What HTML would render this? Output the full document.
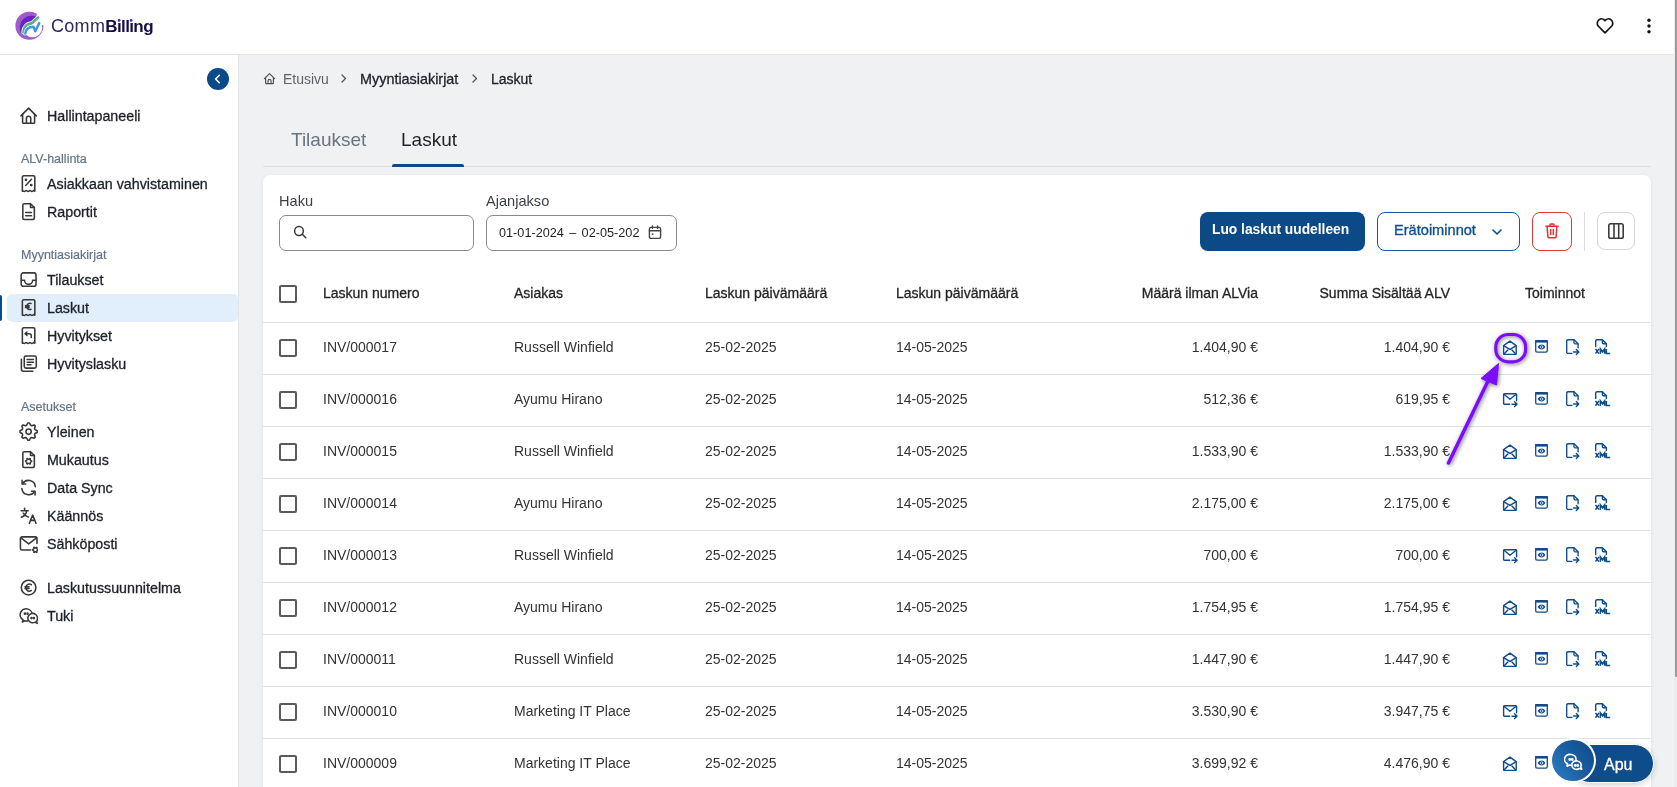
<!DOCTYPE html><html><head><meta charset="utf-8"><style>
*{box-sizing:border-box;margin:0;padding:0}
html,body{width:1677px;height:787px;overflow:hidden;background:#f0f1f3;font-family:"Liberation Sans",sans-serif;color:#1f2937}
.abs{position:absolute}
.t{position:absolute;white-space:nowrap;line-height:16px}
.nav{position:absolute;left:47px;font-size:14.25px;color:#1d2129;-webkit-text-stroke:0.3px #1d2129;white-space:nowrap;line-height:16px}
.sec{position:absolute;left:21px;font-size:12.5px;color:#667388;white-space:nowrap;line-height:14px;-webkit-text-stroke:0.2px #667388}
.cell{position:absolute;font-size:14px;line-height:16px;color:#333;white-space:nowrap}
.hd{position:absolute;font-size:14px;line-height:16px;color:#262626;white-space:nowrap;-webkit-text-stroke:0.3px #262626}
.r{text-align:right}
.cb{position:absolute;left:279px;width:18px;height:18px;border:2px solid #5a5a5a;border-radius:2px;background:#fff}
.ln{position:absolute;left:263px;width:1388px;height:1px;background:#e0e0e0}
</style></head><body><div id="root" style="position:absolute;left:0;top:0;width:1677px;height:787px;overflow:hidden;will-change:transform">
<div class="abs" style="left:0;top:0;width:1677px;height:55px;background:#fff;border-bottom:1px solid #e2e4e8"></div>
<svg class="abs" style="left:12px;top:8px" width="36" height="36" viewBox="12 8 36 36">
<defs><clipPath id="cpv"><path d="M8 40 L20 31 L27 22 L40 14 L48 4 L8 4 Z"/></clipPath></defs>
<circle cx="29.4" cy="25.75" r="14" fill="#a05bc8"/>
<circle cx="32.6" cy="27.7" r="9.6" fill="#fff"/>
<path d="M21.5 33.5 A11.6 11.6 0 0 1 38.4 18.2 L32.1 23.1 C26.5 23.6 23.8 27 23.4 32.5 Z" fill="#6723c5"/>
<path d="M32.6 27.7 L37.6 12 Q45 12 48 14 L48 26 L43.2 25 Z" fill="#fff"/>
<path d="M23.4 32.5 C23.8 27 26.5 23.6 32.1 23.1 L38.1 17.6" fill="none" stroke="#fff" stroke-width="4.2" stroke-linecap="round" stroke-linejoin="round"/>
<path d="M23.4 32.5 C23.8 27 26.5 23.6 32.1 23.1 L38.1 17.6" fill="none" stroke="#5fad8c" stroke-width="2.7" stroke-linecap="round" stroke-linejoin="round"/>
<path d="M25.3 33.6 C25.6 29.5 28 27 33.5 26.8 L35.3 31.3 L39.2 23.1" fill="none" stroke="#fff" stroke-width="3.6" stroke-linecap="round" stroke-linejoin="round"/>
<path d="M25.3 33.6 C25.6 29.5 28 27 33.5 26.8 L35.3 31.3 L39.2 23.1" fill="none" stroke="#3f9ae0" stroke-width="2.5" stroke-linecap="round" stroke-linejoin="round"/>
</svg>
<div class="t" style="left:51px;top:15px;font-size:18px;line-height:22px;color:#2e2862;letter-spacing:0.3px">Comm<b style="color:#160f44;font-size:17px;letter-spacing:-0.6px">Bıllıng</b></div>
<svg class="abs" style="left:110px;top:15px" width="30" height="10" viewBox="110 15 30 10"><circle cx="119.1" cy="20.4" r="1.4" fill="#5a16cf"/><circle cx="131.1" cy="20.4" r="1.4" fill="#5a16cf"/></svg>
<svg class="abs" style="left:1595px;top:17px" width="20" height="18" viewBox="0 0 20 18"><path d="M10 15.8 L3.2 9 A4.3 4.3 0 0 1 10 3.6 A4.3 4.3 0 0 1 16.8 9 Z" fill="none" stroke="#141414" stroke-width="1.7" stroke-linejoin="round"/></svg>
<svg class="abs" style="left:1644px;top:16px" width="10" height="20" viewBox="0 0 10 20"><circle cx="5" cy="4.3" r="1.7" fill="#141414"/><circle cx="5" cy="10" r="1.7" fill="#141414"/><circle cx="5" cy="15.8" r="1.7" fill="#141414"/></svg>
<div class="abs" style="left:0;top:55px;width:239px;height:732px;background:#fff;border-right:1px solid #e2e4e8"></div>
<div class="abs" style="left:207px;top:68px;width:22px;height:22px;border-radius:50%;background:#0c4a8a"></div>
<svg class="abs" style="left:207px;top:68px" width="22" height="22" viewBox="0 0 22 22" ><path d="M12.3 7.2 L8.6 11 L12.3 14.8" fill="none" stroke="#fff" stroke-width="1.5" stroke-linecap="round" stroke-linejoin="round"/></svg>
<div class="abs" style="left:7px;top:294px;width:231px;height:28px;border-radius:5px;background:#e1eefc"></div>
<div class="abs" style="left:0;top:295px;width:2px;height:26px;border-radius:0 2px 2px 0;background:#0c4a8a"></div>
<div class="nav" style="top:108px">Hallintapaneeli</div>
<svg class="abs" style="left:19.3px;top:106.4px" width="19.2" height="19.2" viewBox="0 0 16 16"><g fill="none" stroke="#383838" stroke-width="1.3" stroke-linecap="round" stroke-linejoin="round"><path d="M1.6 8.2 L8 1.8 L14.4 8.2"/><path d="M3 6.8 V13.6 A0.8 0.8 0 0 0 3.8 14.4 H12.2 A0.8 0.8 0 0 0 13 13.6 V6.8"/><path d="M6.2 14.4 V10.4 A1.8 1.8 0 0 1 9.8 10.4 V14.4"/></g></svg>
<div class="nav" style="top:176px">Asiakkaan vahvistaminen</div>
<svg class="abs" style="left:19.3px;top:174.4px" width="19.2" height="19.2" viewBox="0 0 16 16"><g fill="none" stroke="#383838" stroke-width="1.3" stroke-linecap="round" stroke-linejoin="round"><path d="M2.8 14.4 V2.6 A1.2 1.2 0 0 1 4 1.4 H12 A1.2 1.2 0 0 1 13.2 2.6 V14.4 Q12.4 13.4 11.6 14.2 Q10.8 15 10 14.2 Q9.2 13.4 8.4 14.2 Q7.6 15 6.8 14.2 Q6 13.4 5.2 14.2 Q4.4 15 3.6 14.2 Q3.2 13.8 2.8 14.4 Z"/><path d="M5.6 9.6 L10.4 4.4"/><circle cx="5.8" cy="4.8" r="0.5" fill="#383838"/><circle cx="10.2" cy="9.2" r="0.5" fill="#383838"/></g></svg>
<div class="nav" style="top:204px">Raportit</div>
<svg class="abs" style="left:19.3px;top:202.4px" width="19.2" height="19.2" viewBox="0 0 16 16"><g fill="none" stroke="#383838" stroke-width="1.3" stroke-linecap="round" stroke-linejoin="round"><path d="M9.6 1.4 H4.4 A1.2 1.2 0 0 0 3.2 2.6 V13.4 A1.2 1.2 0 0 0 4.4 14.6 H11.6 A1.2 1.2 0 0 0 12.8 13.4 V4.6 Z"/><path d="M9.6 1.4 V4.6 H12.8"/><path d="M5.6 8.8 H10.4 M5.6 11.4 H10.4"/></g></svg>
<div class="nav" style="top:272px">Tilaukset</div>
<svg class="abs" style="left:19.3px;top:270.4px" width="19.2" height="19.2" viewBox="0 0 16 16"><g fill="none" stroke="#383838" stroke-width="1.3" stroke-linecap="round" stroke-linejoin="round"><rect x="1.8" y="2.4" width="12.4" height="11.2" rx="1.8"/><path d="M1.8 8.6 H4.6 A3.4 3.4 0 0 0 11.4 8.6 H14.2"/></g></svg>
<div class="nav" style="top:300px">Laskut</div>
<svg class="abs" style="left:19.3px;top:298.4px" width="19.2" height="19.2" viewBox="0 0 16 16"><g fill="none" stroke="#383838" stroke-width="1.3" stroke-linecap="round" stroke-linejoin="round"><path d="M2.8 14.4 V2.6 A1.2 1.2 0 0 1 4 1.4 H12 A1.2 1.2 0 0 1 13.2 2.6 V14.4 Q12.4 13.4 11.6 14.2 Q10.8 15 10 14.2 Q9.2 13.4 8.4 14.2 Q7.6 15 6.8 14.2 Q6 13.4 5.2 14.2 Q4.4 15 3.6 14.2 Q3.2 13.8 2.8 14.4 Z"/><path d="M10 4.6 A2.6 2.6 0 1 0 10 9.4"/><path d="M5.4 6.4 H8.4 M5.4 7.8 H8.4"/></g></svg>
<div class="nav" style="top:328px">Hyvitykset</div>
<svg class="abs" style="left:19.3px;top:326.4px" width="19.2" height="19.2" viewBox="0 0 16 16"><g fill="none" stroke="#383838" stroke-width="1.3" stroke-linecap="round" stroke-linejoin="round"><path d="M2.8 14.4 V2.6 A1.2 1.2 0 0 1 4 1.4 H12 A1.2 1.2 0 0 1 13.2 2.6 V14.4 Q12.4 13.4 11.6 14.2 Q10.8 15 10 14.2 Q9.2 13.4 8.4 14.2 Q7.6 15 6.8 14.2 Q6 13.4 5.2 14.2 Q4.4 15 3.6 14.2 Q3.2 13.8 2.8 14.4 Z"/><path d="M6.6 5 L5.2 6.4 L6.6 7.8"/><path d="M5.2 6.4 H8.6 A1.6 1.6 0 0 1 10.2 8 V9.6"/></g></svg>
<div class="nav" style="top:356px">Hyvityslasku</div>
<svg class="abs" style="left:19.3px;top:354.4px" width="19.2" height="19.2" viewBox="0 0 16 16"><g fill="none" stroke="#383838" stroke-width="1.3" stroke-linecap="round" stroke-linejoin="round"><rect x="4.4" y="1.6" width="10" height="10.2" rx="1.4"/><path d="M2 4.4 V12.6 A1.8 1.8 0 0 0 3.8 14.4 H11.6"/><path d="M6.8 4.6 H12 M6.8 6.8 H12 M6.8 9 H10"/></g></svg>
<div class="nav" style="top:424px">Yleinen</div>
<svg class="abs" style="left:19.3px;top:422.4px" width="19.2" height="19.2" viewBox="0 0 16 16"><g fill="none" stroke="#383838" stroke-width="1.3" stroke-linecap="round" stroke-linejoin="round"><path d="M15.17 7.29 L15.17 8.71 L13.36 9.63 L12.94 10.64 L13.57 12.57 L12.57 13.57 L10.64 12.94 L9.63 13.36 L8.71 15.17 L7.29 15.17 L6.37 13.36 L5.36 12.94 L3.43 13.57 L2.43 12.57 L3.06 10.64 L2.64 9.63 L0.83 8.71 L0.83 7.29 L2.64 6.37 L3.06 5.36 L2.43 3.43 L3.43 2.43 L5.36 3.06 L6.37 2.64 L7.29 0.83 L8.71 0.83 L9.63 2.64 L10.64 3.06 L12.57 2.43 L13.57 3.43 L12.94 5.36 L13.36 6.37Z"/><circle cx="8" cy="8" r="2.2"/></g></svg>
<div class="nav" style="top:452px">Mukautus</div>
<svg class="abs" style="left:19.3px;top:450.4px" width="19.2" height="19.2" viewBox="0 0 16 16"><g fill="none" stroke="#383838" stroke-width="1.3" stroke-linecap="round" stroke-linejoin="round"><path d="M9.6 1.4 H4.4 A1.2 1.2 0 0 0 3.2 2.6 V13.4 A1.2 1.2 0 0 0 4.4 14.6 H11.6 A1.2 1.2 0 0 0 12.8 13.4 V4.6 Z"/><path d="M9.6 1.4 V4.6 H12.8"/><path d="M10.58 9.06 L10.58 9.74 L9.57 10.05 L9.35 10.43 L9.58 11.46 L8.99 11.80 L8.22 11.09 L7.78 11.09 L7.01 11.80 L6.42 11.46 L6.65 10.43 L6.43 10.05 L5.42 9.74 L5.42 9.06 L6.43 8.75 L6.65 8.37 L6.42 7.34 L7.01 7.00 L7.78 7.71 L8.22 7.71 L8.99 7.00 L9.58 7.34 L9.35 8.37 L9.57 8.75Z" stroke-width="1.1"/></g></svg>
<div class="nav" style="top:480px">Data Sync</div>
<svg class="abs" style="left:19.3px;top:478.4px" width="19.2" height="19.2" viewBox="0 0 16 16"><g fill="none" stroke="#383838" stroke-width="1.3" stroke-linecap="round" stroke-linejoin="round"><path d="M13.6 7.2 A5.8 5.8 0 0 0 3 4.6"/><path d="M2.4 8.8 A5.8 5.8 0 0 0 13 11.4"/><path d="M2.6 1.8 V5 H5.6"/><path d="M13.4 14.2 V11 H10.4"/></g></svg>
<div class="nav" style="top:508px">Käännös</div>
<svg class="abs" style="left:19.3px;top:506.4px" width="19.2" height="19.2" viewBox="0 0 16 16"><g fill="none" stroke="#383838" stroke-width="1.3" stroke-linecap="round" stroke-linejoin="round"><path d="M1.8 4 H7.6 M4.7 1.8 V4 M6.4 4 C6 7 4 8.6 2 9.4 M3.6 6 C4.4 7.6 6 8.8 7.8 9.2"/><path d="M8.6 14.4 L11.4 7.6 L14.2 14.4 M9.6 12 H13.2"/></g></svg>
<div class="nav" style="top:536px">Sähköposti</div>
<svg class="abs" style="left:19.3px;top:534.4px" width="19.2" height="19.2" viewBox="0 0 16 16"><g fill="none" stroke="#383838" stroke-width="1.3" stroke-linecap="round" stroke-linejoin="round"><path d="M15 8 V3.8 A1.4 1.4 0 0 0 13.6 2.4 H2.6 A1.4 1.4 0 0 0 1.2 3.8 V12 A1.4 1.4 0 0 0 2.6 13.4 H9.6"/><path d="M1.6 3.2 L8.1 8.2 L14.6 3.2"/><path d="M15.98 12.89 L15.98 13.51 L14.99 13.77 L14.79 14.11 L15.06 15.10 L14.52 15.42 L13.80 14.69 L13.40 14.69 L12.68 15.42 L12.14 15.10 L12.41 14.11 L12.21 13.77 L11.22 13.51 L11.22 12.89 L12.21 12.63 L12.41 12.29 L12.14 11.30 L12.68 10.98 L13.40 11.71 L13.80 11.71 L14.52 10.98 L15.06 11.30 L14.79 12.29 L14.99 12.63Z" stroke-width="1.1"/></g></svg>
<div class="nav" style="top:580px">Laskutussuunnitelma</div>
<svg class="abs" style="left:19.3px;top:578.4px" width="19.2" height="19.2" viewBox="0 0 16 16"><g fill="none" stroke="#383838" stroke-width="1.3" stroke-linecap="round" stroke-linejoin="round"><circle cx="8" cy="8" r="6.1"/><path d="M10.3 5.6 A2.9 2.9 0 1 0 10.3 10.4"/><path d="M5 7.3 H8.4 M5 8.7 H8.4"/></g></svg>
<div class="nav" style="top:608px">Tuki</div>
<svg class="abs" style="left:19.3px;top:606.4px" width="19.2" height="19.2" viewBox="0 0 16 16"><g fill="none" stroke="#383838" stroke-width="1.3" stroke-linecap="round" stroke-linejoin="round"><path d="M10.8 8.6 A5 5 0 1 0 3.4 11.6 L2.8 13.3 L4.9 12.3 A5 5 0 0 0 7.2 12.4"/><path d="M15.4 10.1 A4 3.9 0 1 0 13.5 13.4 L15.2 14.5 L14.7 12.6 A4 3.9 0 0 0 15.4 10.1 Z" fill="#fff"/><circle cx="4.9" cy="6.4" r="0.45" fill="#383838"/><circle cx="7.1" cy="6.4" r="0.45" fill="#383838"/><circle cx="10.4" cy="10.1" r="0.45" fill="#383838"/><circle cx="12.4" cy="10.1" r="0.45" fill="#383838"/></g></svg>
<div class="sec" style="top:152px">ALV-hallinta</div>
<div class="sec" style="top:248px">Myyntiasiakirjat</div>
<div class="sec" style="top:400px">Asetukset</div>
<svg class="abs" style="left:263px;top:72px" width="13" height="13" viewBox="0 0 13 13"><g fill="none" stroke="#555" stroke-width="1.2" stroke-linecap="round" stroke-linejoin="round"><path d="M1.4 6.6 L6.5 1.6 L11.6 6.6"/><path d="M2.6 5.4 V11 A0.6 0.6 0 0 0 3.2 11.6 H9.8 A0.6 0.6 0 0 0 10.4 11 V5.4"/><path d="M5 11.6 V8.8 A1.5 1.5 0 0 1 8 8.8 V11.6"/></g></svg>
<div class="t" style="left:283px;top:71px;font-size:14px;color:#5f6368">Etusivu</div>
<svg class="abs" style="left:339px;top:73px" width="10" height="11" viewBox="0 0 10 11"><g fill="none" stroke="#555" stroke-width="1.3" stroke-linecap="round" stroke-linejoin="round"><path d="M3 2 L6.5 5.5 L3 9"/></g></svg>
<div class="t" style="left:360px;top:71px;font-size:14.4px;color:#1d2129;-webkit-text-stroke:0.3px #1d2129">Myyntiasiakirjat</div>
<svg class="abs" style="left:470px;top:73px" width="10" height="11" viewBox="0 0 10 11"><g fill="none" stroke="#555" stroke-width="1.3" stroke-linecap="round" stroke-linejoin="round"><path d="M3 2 L6.5 5.5 L3 9"/></g></svg>
<div class="t" style="left:491px;top:71px;font-size:14px;color:#1d2129;-webkit-text-stroke:0.3px #1d2129">Laskut</div>
<div class="t" style="left:291px;top:129px;font-size:19px;line-height:22px;color:#6b7280">Tilaukset</div>
<div class="t" style="left:401px;top:129px;font-size:19px;line-height:22px;color:#1f2229">Laskut</div>
<div class="abs" style="left:263px;top:166px;width:1388px;height:1px;background:#dcdfe4"></div>
<div class="abs" style="left:392px;top:164px;width:72px;height:3px;border-radius:2px 2px 0 0;background:#0c4a8a"></div>
<div class="abs" style="left:263px;top:175px;width:1388px;height:640px;border-radius:8px;background:#fff;box-shadow:0 1px 4px rgba(0,0,0,0.07)"></div>
<div class="t" style="left:279px;top:193px;font-size:14.6px;color:#3a3f47">Haku</div>
<div class="abs" style="left:279px;top:215px;width:195px;height:36px;border:1px solid #8a8a8a;border-radius:7px"></div>
<svg class="abs" style="left:293px;top:225px" width="15" height="15" viewBox="0 0 15 15"><g fill="none" stroke="#3a3a3a" stroke-width="1.5" stroke-linecap="round" stroke-linejoin="round"><circle cx="6" cy="6" r="4.4"/><path d="M9.3 9.3 L12.8 12.8"/></g></svg>
<div class="t" style="left:486px;top:193px;font-size:14.6px;color:#3a3f47">Ajanjakso</div>
<div class="abs" style="left:486px;top:215px;width:191px;height:36px;border:1px solid #8a8a8a;border-radius:7px"></div>
<div class="t" style="left:499px;top:225px;font-size:12.7px;color:#1f1f1f;word-spacing:1.8px">01-01-2024 – 02-05-202</div>
<svg class="abs" style="left:648px;top:225px" width="14" height="15" viewBox="0 0 14 15"><g fill="none" stroke="#444" stroke-width="1.4" stroke-linecap="round" stroke-linejoin="round"><rect x="1.4" y="2.4" width="11.2" height="11" rx="1.6"/><path d="M1.4 5.8 H12.6 M4.4 1 V3.4 M9.6 1 V3.4"/><rect x="3.8" y="8.4" width="1.6" height="1.6" fill="#444" stroke="none"/></g></svg>
<div class="abs" style="left:1200px;top:212px;width:165px;height:39px;border-radius:8px;background:#0b4a87"></div>
<div class="t" style="left:1212px;top:222px;font-size:13.8px;color:#fff;font-weight:bold">Luo laskut uudelleen</div>
<div class="abs" style="left:1377px;top:212px;width:143px;height:39px;border-radius:8px;border:1.5px solid #1a5597;background:#fff"></div>
<div class="t" style="left:1394px;top:222px;font-size:14.6px;color:#12508f;-webkit-text-stroke:0.35px #12508f">Erätoiminnot</div>
<svg class="abs" style="left:1490px;top:225px" width="14" height="14" viewBox="0 0 14 14"><g fill="none" stroke="#12508f" stroke-width="1.7" stroke-linecap="round" stroke-linejoin="round"><path d="M3 5 L7 9 L11 5"/></g></svg>
<div class="abs" style="left:1532px;top:212px;width:40px;height:39px;border-radius:8px;border:1.5px solid #df3b3b;background:#fff"></div>
<svg class="abs" style="left:1543px;top:222px" width="18" height="18" viewBox="0 0 18 18"><g fill="none" stroke="#dd3535" stroke-width="1.5" stroke-linecap="round" stroke-linejoin="round"><path d="M2.9 4.2 H15.1"/><path d="M7 4 V2.9 A0.9 0.9 0 0 1 7.9 2 H10.1 A0.9 0.9 0 0 1 11 2.9 V4"/><path d="M4.1 4.4 L4.9 14.9 A1 1 0 0 0 5.9 15.8 H12.1 A1 1 0 0 0 13.1 14.9 L13.9 4.4"/><path d="M7.7 7.6 V12.4 M10.3 7.6 V12.4"/></g></svg>
<div class="abs" style="left:1584px;top:212px;width:1px;height:39px;background:#dcdcdc"></div>
<div class="abs" style="left:1597px;top:212px;width:38px;height:38px;border-radius:8px;border:1px solid #d6d6d6;background:#fff"></div>
<svg class="abs" style="left:1607px;top:222px" width="18" height="18" viewBox="0 0 18 18"><g fill="none" stroke="#3c3c3c" stroke-width="1.6" stroke-linecap="round" stroke-linejoin="round"><rect x="1.8" y="1.8" width="14.4" height="14.4" rx="1.8"/><path d="M7 1.8 V16.2 M11.7 1.8 V16.2"/></g></svg>
<div class="cb" style="top:285px"></div>
<div class="hd" style="left:323px;top:285px">Laskun numero</div>
<div class="hd" style="left:514px;top:285px">Asiakas</div>
<div class="hd" style="left:705px;top:285px">Laskun päivämäärä</div>
<div class="hd" style="left:896px;top:285px">Laskun päivämäärä</div>
<div class="hd r" style="left:1058px;width:200px;top:285px">Määrä ilman ALVia</div>
<div class="hd r" style="left:1250px;width:200px;top:285px">Summa Sisältää ALV</div>
<div class="hd" style="left:1455px;width:200px;top:285px;text-align:center">Toiminnot</div>
<div class="ln" style="top:322px"></div>
<div class="cb" style="top:339px"></div>
<div class="cell" style="left:323px;top:339px">INV/000017</div>
<div class="cell" style="left:514px;top:339px">Russell Winfield</div>
<div class="cell" style="left:705px;top:339px">25-02-2025</div>
<div class="cell" style="left:896px;top:339px">14-05-2025</div>
<div class="cell r" style="left:1058px;width:200px;top:339px">1.404,90 €</div>
<div class="cell r" style="left:1250px;width:200px;top:339px">1.404,90 €</div>
<svg class="abs" style="left:1502px;top:340px" width="16" height="16" viewBox="0 0 16 16"><g fill="none" stroke="#0f4c8c" stroke-width="1.4" stroke-linecap="round" stroke-linejoin="round"><path d="M1.6 5.6 L7.9 1.1 L14.2 5.6 V13.6 A0.8 0.8 0 0 1 13.4 14.4 H2.4 A0.8 0.8 0 0 1 1.6 13.6 Z"/><path d="M1.9 5.9 L7.9 9.4 L13.9 5.9"/><path d="M2 14 L5.9 9.9 M13.8 14 L9.9 9.9"/></g></svg>
<svg class="abs" style="left:1534px;top:339px" width="16" height="16" viewBox="0 0 16 16"><g fill="none" stroke="#0f4c8c" stroke-width="1.3" stroke-linecap="round" stroke-linejoin="round"><rect x="1.7" y="1.7" width="11.6" height="11.5" rx="1.4"/><path d="M1.2 2.3 H13.8" stroke-width="2.6" stroke-linecap="butt"/><path d="M3.6 8 C5.4 4.7 9.6 4.7 11.4 8 C9.6 11.3 5.4 11.3 3.6 8 Z" fill="#0f4c8c" stroke="none"/><circle cx="7.5" cy="8" r="1.25" fill="none" stroke="#fff" stroke-width="0.65"/></g></svg>
<svg class="abs" style="left:1565px;top:338px" width="16" height="18" viewBox="0 0 16 18"><g fill="none" stroke="#0f4c8c" stroke-width="1.35" stroke-linecap="round" stroke-linejoin="round"><path d="M6.8 15.4 H3 A1.3 1.3 0 0 1 1.7 14.1 V3 A1.3 1.3 0 0 1 3 1.7 H9 L13.1 5.8 V9.7"/><path d="M9 2 V4.6 A1.2 1.2 0 0 0 10.2 5.8 H12.8"/><path d="M8.4 14 H13.6 M11.3 11.5 L13.8 14 L11.3 16.5"/></g></svg>
<svg class="abs" style="left:1594px;top:338px" width="17" height="18" viewBox="0 0 17 18"><g fill="none" stroke="#0f4c8c" stroke-width="1.4" stroke-linecap="round" stroke-linejoin="round"><path d="M1.7 8.6 V3 A1.3 1.3 0 0 1 3 1.7 H8.4 L12.4 5.7 V8.6"/><path d="M8.4 2 V4.5 A1.2 1.2 0 0 0 9.6 5.7 H12.1"/><path d="M1.5 10.9 L4.9 15.6 M4.9 10.9 L1.5 15.6 M6.4 15.8 V10.9 L8.5 13.8 L10.6 10.9 V15.8 M12.3 10.9 V15.5 H16.2" stroke-width="1.6" stroke-linecap="butt" stroke-linejoin="miter"/></g></svg>
<div class="ln" style="top:374px"></div>
<div class="cb" style="top:391px"></div>
<div class="cell" style="left:323px;top:391px">INV/000016</div>
<div class="cell" style="left:514px;top:391px">Ayumu Hirano</div>
<div class="cell" style="left:705px;top:391px">25-02-2025</div>
<div class="cell" style="left:896px;top:391px">14-05-2025</div>
<div class="cell r" style="left:1058px;width:200px;top:391px">512,36 €</div>
<div class="cell r" style="left:1250px;width:200px;top:391px">619,95 €</div>
<svg class="abs" style="left:1502px;top:392px" width="17" height="17" viewBox="0 0 17 17"><g fill="none" stroke="#0f4c8c" stroke-width="1.4" stroke-linecap="round" stroke-linejoin="round"><path d="M14.6 8.8 V2.8 A1 1 0 0 0 13.6 1.8 H2.6 A1 1 0 0 0 1.6 2.8 V11.2 A1 1 0 0 0 2.6 12.2 H7.7"/><path d="M2 2.3 L7.9 7.2 L14.2 2.3"/><path d="M10 12.2 H15 M12.6 9.8 L15.1 12.2 L12.6 14.6"/></g></svg>
<svg class="abs" style="left:1534px;top:391px" width="16" height="16" viewBox="0 0 16 16"><g fill="none" stroke="#0f4c8c" stroke-width="1.3" stroke-linecap="round" stroke-linejoin="round"><rect x="1.7" y="1.7" width="11.6" height="11.5" rx="1.4"/><path d="M1.2 2.3 H13.8" stroke-width="2.6" stroke-linecap="butt"/><path d="M3.6 8 C5.4 4.7 9.6 4.7 11.4 8 C9.6 11.3 5.4 11.3 3.6 8 Z" fill="#0f4c8c" stroke="none"/><circle cx="7.5" cy="8" r="1.25" fill="none" stroke="#fff" stroke-width="0.65"/></g></svg>
<svg class="abs" style="left:1565px;top:390px" width="16" height="18" viewBox="0 0 16 18"><g fill="none" stroke="#0f4c8c" stroke-width="1.35" stroke-linecap="round" stroke-linejoin="round"><path d="M6.8 15.4 H3 A1.3 1.3 0 0 1 1.7 14.1 V3 A1.3 1.3 0 0 1 3 1.7 H9 L13.1 5.8 V9.7"/><path d="M9 2 V4.6 A1.2 1.2 0 0 0 10.2 5.8 H12.8"/><path d="M8.4 14 H13.6 M11.3 11.5 L13.8 14 L11.3 16.5"/></g></svg>
<svg class="abs" style="left:1594px;top:390px" width="17" height="18" viewBox="0 0 17 18"><g fill="none" stroke="#0f4c8c" stroke-width="1.4" stroke-linecap="round" stroke-linejoin="round"><path d="M1.7 8.6 V3 A1.3 1.3 0 0 1 3 1.7 H8.4 L12.4 5.7 V8.6"/><path d="M8.4 2 V4.5 A1.2 1.2 0 0 0 9.6 5.7 H12.1"/><path d="M1.5 10.9 L4.9 15.6 M4.9 10.9 L1.5 15.6 M6.4 15.8 V10.9 L8.5 13.8 L10.6 10.9 V15.8 M12.3 10.9 V15.5 H16.2" stroke-width="1.6" stroke-linecap="butt" stroke-linejoin="miter"/></g></svg>
<div class="ln" style="top:426px"></div>
<div class="cb" style="top:443px"></div>
<div class="cell" style="left:323px;top:443px">INV/000015</div>
<div class="cell" style="left:514px;top:443px">Russell Winfield</div>
<div class="cell" style="left:705px;top:443px">25-02-2025</div>
<div class="cell" style="left:896px;top:443px">14-05-2025</div>
<div class="cell r" style="left:1058px;width:200px;top:443px">1.533,90 €</div>
<div class="cell r" style="left:1250px;width:200px;top:443px">1.533,90 €</div>
<svg class="abs" style="left:1502px;top:444px" width="16" height="16" viewBox="0 0 16 16"><g fill="none" stroke="#0f4c8c" stroke-width="1.4" stroke-linecap="round" stroke-linejoin="round"><path d="M1.6 5.6 L7.9 1.1 L14.2 5.6 V13.6 A0.8 0.8 0 0 1 13.4 14.4 H2.4 A0.8 0.8 0 0 1 1.6 13.6 Z"/><path d="M1.9 5.9 L7.9 9.4 L13.9 5.9"/><path d="M2 14 L5.9 9.9 M13.8 14 L9.9 9.9"/></g></svg>
<svg class="abs" style="left:1534px;top:443px" width="16" height="16" viewBox="0 0 16 16"><g fill="none" stroke="#0f4c8c" stroke-width="1.3" stroke-linecap="round" stroke-linejoin="round"><rect x="1.7" y="1.7" width="11.6" height="11.5" rx="1.4"/><path d="M1.2 2.3 H13.8" stroke-width="2.6" stroke-linecap="butt"/><path d="M3.6 8 C5.4 4.7 9.6 4.7 11.4 8 C9.6 11.3 5.4 11.3 3.6 8 Z" fill="#0f4c8c" stroke="none"/><circle cx="7.5" cy="8" r="1.25" fill="none" stroke="#fff" stroke-width="0.65"/></g></svg>
<svg class="abs" style="left:1565px;top:442px" width="16" height="18" viewBox="0 0 16 18"><g fill="none" stroke="#0f4c8c" stroke-width="1.35" stroke-linecap="round" stroke-linejoin="round"><path d="M6.8 15.4 H3 A1.3 1.3 0 0 1 1.7 14.1 V3 A1.3 1.3 0 0 1 3 1.7 H9 L13.1 5.8 V9.7"/><path d="M9 2 V4.6 A1.2 1.2 0 0 0 10.2 5.8 H12.8"/><path d="M8.4 14 H13.6 M11.3 11.5 L13.8 14 L11.3 16.5"/></g></svg>
<svg class="abs" style="left:1594px;top:442px" width="17" height="18" viewBox="0 0 17 18"><g fill="none" stroke="#0f4c8c" stroke-width="1.4" stroke-linecap="round" stroke-linejoin="round"><path d="M1.7 8.6 V3 A1.3 1.3 0 0 1 3 1.7 H8.4 L12.4 5.7 V8.6"/><path d="M8.4 2 V4.5 A1.2 1.2 0 0 0 9.6 5.7 H12.1"/><path d="M1.5 10.9 L4.9 15.6 M4.9 10.9 L1.5 15.6 M6.4 15.8 V10.9 L8.5 13.8 L10.6 10.9 V15.8 M12.3 10.9 V15.5 H16.2" stroke-width="1.6" stroke-linecap="butt" stroke-linejoin="miter"/></g></svg>
<div class="ln" style="top:478px"></div>
<div class="cb" style="top:495px"></div>
<div class="cell" style="left:323px;top:495px">INV/000014</div>
<div class="cell" style="left:514px;top:495px">Ayumu Hirano</div>
<div class="cell" style="left:705px;top:495px">25-02-2025</div>
<div class="cell" style="left:896px;top:495px">14-05-2025</div>
<div class="cell r" style="left:1058px;width:200px;top:495px">2.175,00 €</div>
<div class="cell r" style="left:1250px;width:200px;top:495px">2.175,00 €</div>
<svg class="abs" style="left:1502px;top:496px" width="16" height="16" viewBox="0 0 16 16"><g fill="none" stroke="#0f4c8c" stroke-width="1.4" stroke-linecap="round" stroke-linejoin="round"><path d="M1.6 5.6 L7.9 1.1 L14.2 5.6 V13.6 A0.8 0.8 0 0 1 13.4 14.4 H2.4 A0.8 0.8 0 0 1 1.6 13.6 Z"/><path d="M1.9 5.9 L7.9 9.4 L13.9 5.9"/><path d="M2 14 L5.9 9.9 M13.8 14 L9.9 9.9"/></g></svg>
<svg class="abs" style="left:1534px;top:495px" width="16" height="16" viewBox="0 0 16 16"><g fill="none" stroke="#0f4c8c" stroke-width="1.3" stroke-linecap="round" stroke-linejoin="round"><rect x="1.7" y="1.7" width="11.6" height="11.5" rx="1.4"/><path d="M1.2 2.3 H13.8" stroke-width="2.6" stroke-linecap="butt"/><path d="M3.6 8 C5.4 4.7 9.6 4.7 11.4 8 C9.6 11.3 5.4 11.3 3.6 8 Z" fill="#0f4c8c" stroke="none"/><circle cx="7.5" cy="8" r="1.25" fill="none" stroke="#fff" stroke-width="0.65"/></g></svg>
<svg class="abs" style="left:1565px;top:494px" width="16" height="18" viewBox="0 0 16 18"><g fill="none" stroke="#0f4c8c" stroke-width="1.35" stroke-linecap="round" stroke-linejoin="round"><path d="M6.8 15.4 H3 A1.3 1.3 0 0 1 1.7 14.1 V3 A1.3 1.3 0 0 1 3 1.7 H9 L13.1 5.8 V9.7"/><path d="M9 2 V4.6 A1.2 1.2 0 0 0 10.2 5.8 H12.8"/><path d="M8.4 14 H13.6 M11.3 11.5 L13.8 14 L11.3 16.5"/></g></svg>
<svg class="abs" style="left:1594px;top:494px" width="17" height="18" viewBox="0 0 17 18"><g fill="none" stroke="#0f4c8c" stroke-width="1.4" stroke-linecap="round" stroke-linejoin="round"><path d="M1.7 8.6 V3 A1.3 1.3 0 0 1 3 1.7 H8.4 L12.4 5.7 V8.6"/><path d="M8.4 2 V4.5 A1.2 1.2 0 0 0 9.6 5.7 H12.1"/><path d="M1.5 10.9 L4.9 15.6 M4.9 10.9 L1.5 15.6 M6.4 15.8 V10.9 L8.5 13.8 L10.6 10.9 V15.8 M12.3 10.9 V15.5 H16.2" stroke-width="1.6" stroke-linecap="butt" stroke-linejoin="miter"/></g></svg>
<div class="ln" style="top:530px"></div>
<div class="cb" style="top:547px"></div>
<div class="cell" style="left:323px;top:547px">INV/000013</div>
<div class="cell" style="left:514px;top:547px">Russell Winfield</div>
<div class="cell" style="left:705px;top:547px">25-02-2025</div>
<div class="cell" style="left:896px;top:547px">14-05-2025</div>
<div class="cell r" style="left:1058px;width:200px;top:547px">700,00 €</div>
<div class="cell r" style="left:1250px;width:200px;top:547px">700,00 €</div>
<svg class="abs" style="left:1502px;top:548px" width="17" height="17" viewBox="0 0 17 17"><g fill="none" stroke="#0f4c8c" stroke-width="1.4" stroke-linecap="round" stroke-linejoin="round"><path d="M14.6 8.8 V2.8 A1 1 0 0 0 13.6 1.8 H2.6 A1 1 0 0 0 1.6 2.8 V11.2 A1 1 0 0 0 2.6 12.2 H7.7"/><path d="M2 2.3 L7.9 7.2 L14.2 2.3"/><path d="M10 12.2 H15 M12.6 9.8 L15.1 12.2 L12.6 14.6"/></g></svg>
<svg class="abs" style="left:1534px;top:547px" width="16" height="16" viewBox="0 0 16 16"><g fill="none" stroke="#0f4c8c" stroke-width="1.3" stroke-linecap="round" stroke-linejoin="round"><rect x="1.7" y="1.7" width="11.6" height="11.5" rx="1.4"/><path d="M1.2 2.3 H13.8" stroke-width="2.6" stroke-linecap="butt"/><path d="M3.6 8 C5.4 4.7 9.6 4.7 11.4 8 C9.6 11.3 5.4 11.3 3.6 8 Z" fill="#0f4c8c" stroke="none"/><circle cx="7.5" cy="8" r="1.25" fill="none" stroke="#fff" stroke-width="0.65"/></g></svg>
<svg class="abs" style="left:1565px;top:546px" width="16" height="18" viewBox="0 0 16 18"><g fill="none" stroke="#0f4c8c" stroke-width="1.35" stroke-linecap="round" stroke-linejoin="round"><path d="M6.8 15.4 H3 A1.3 1.3 0 0 1 1.7 14.1 V3 A1.3 1.3 0 0 1 3 1.7 H9 L13.1 5.8 V9.7"/><path d="M9 2 V4.6 A1.2 1.2 0 0 0 10.2 5.8 H12.8"/><path d="M8.4 14 H13.6 M11.3 11.5 L13.8 14 L11.3 16.5"/></g></svg>
<svg class="abs" style="left:1594px;top:546px" width="17" height="18" viewBox="0 0 17 18"><g fill="none" stroke="#0f4c8c" stroke-width="1.4" stroke-linecap="round" stroke-linejoin="round"><path d="M1.7 8.6 V3 A1.3 1.3 0 0 1 3 1.7 H8.4 L12.4 5.7 V8.6"/><path d="M8.4 2 V4.5 A1.2 1.2 0 0 0 9.6 5.7 H12.1"/><path d="M1.5 10.9 L4.9 15.6 M4.9 10.9 L1.5 15.6 M6.4 15.8 V10.9 L8.5 13.8 L10.6 10.9 V15.8 M12.3 10.9 V15.5 H16.2" stroke-width="1.6" stroke-linecap="butt" stroke-linejoin="miter"/></g></svg>
<div class="ln" style="top:582px"></div>
<div class="cb" style="top:599px"></div>
<div class="cell" style="left:323px;top:599px">INV/000012</div>
<div class="cell" style="left:514px;top:599px">Ayumu Hirano</div>
<div class="cell" style="left:705px;top:599px">25-02-2025</div>
<div class="cell" style="left:896px;top:599px">14-05-2025</div>
<div class="cell r" style="left:1058px;width:200px;top:599px">1.754,95 €</div>
<div class="cell r" style="left:1250px;width:200px;top:599px">1.754,95 €</div>
<svg class="abs" style="left:1502px;top:600px" width="16" height="16" viewBox="0 0 16 16"><g fill="none" stroke="#0f4c8c" stroke-width="1.4" stroke-linecap="round" stroke-linejoin="round"><path d="M1.6 5.6 L7.9 1.1 L14.2 5.6 V13.6 A0.8 0.8 0 0 1 13.4 14.4 H2.4 A0.8 0.8 0 0 1 1.6 13.6 Z"/><path d="M1.9 5.9 L7.9 9.4 L13.9 5.9"/><path d="M2 14 L5.9 9.9 M13.8 14 L9.9 9.9"/></g></svg>
<svg class="abs" style="left:1534px;top:599px" width="16" height="16" viewBox="0 0 16 16"><g fill="none" stroke="#0f4c8c" stroke-width="1.3" stroke-linecap="round" stroke-linejoin="round"><rect x="1.7" y="1.7" width="11.6" height="11.5" rx="1.4"/><path d="M1.2 2.3 H13.8" stroke-width="2.6" stroke-linecap="butt"/><path d="M3.6 8 C5.4 4.7 9.6 4.7 11.4 8 C9.6 11.3 5.4 11.3 3.6 8 Z" fill="#0f4c8c" stroke="none"/><circle cx="7.5" cy="8" r="1.25" fill="none" stroke="#fff" stroke-width="0.65"/></g></svg>
<svg class="abs" style="left:1565px;top:598px" width="16" height="18" viewBox="0 0 16 18"><g fill="none" stroke="#0f4c8c" stroke-width="1.35" stroke-linecap="round" stroke-linejoin="round"><path d="M6.8 15.4 H3 A1.3 1.3 0 0 1 1.7 14.1 V3 A1.3 1.3 0 0 1 3 1.7 H9 L13.1 5.8 V9.7"/><path d="M9 2 V4.6 A1.2 1.2 0 0 0 10.2 5.8 H12.8"/><path d="M8.4 14 H13.6 M11.3 11.5 L13.8 14 L11.3 16.5"/></g></svg>
<svg class="abs" style="left:1594px;top:598px" width="17" height="18" viewBox="0 0 17 18"><g fill="none" stroke="#0f4c8c" stroke-width="1.4" stroke-linecap="round" stroke-linejoin="round"><path d="M1.7 8.6 V3 A1.3 1.3 0 0 1 3 1.7 H8.4 L12.4 5.7 V8.6"/><path d="M8.4 2 V4.5 A1.2 1.2 0 0 0 9.6 5.7 H12.1"/><path d="M1.5 10.9 L4.9 15.6 M4.9 10.9 L1.5 15.6 M6.4 15.8 V10.9 L8.5 13.8 L10.6 10.9 V15.8 M12.3 10.9 V15.5 H16.2" stroke-width="1.6" stroke-linecap="butt" stroke-linejoin="miter"/></g></svg>
<div class="ln" style="top:634px"></div>
<div class="cb" style="top:651px"></div>
<div class="cell" style="left:323px;top:651px">INV/000011</div>
<div class="cell" style="left:514px;top:651px">Russell Winfield</div>
<div class="cell" style="left:705px;top:651px">25-02-2025</div>
<div class="cell" style="left:896px;top:651px">14-05-2025</div>
<div class="cell r" style="left:1058px;width:200px;top:651px">1.447,90 €</div>
<div class="cell r" style="left:1250px;width:200px;top:651px">1.447,90 €</div>
<svg class="abs" style="left:1502px;top:652px" width="16" height="16" viewBox="0 0 16 16"><g fill="none" stroke="#0f4c8c" stroke-width="1.4" stroke-linecap="round" stroke-linejoin="round"><path d="M1.6 5.6 L7.9 1.1 L14.2 5.6 V13.6 A0.8 0.8 0 0 1 13.4 14.4 H2.4 A0.8 0.8 0 0 1 1.6 13.6 Z"/><path d="M1.9 5.9 L7.9 9.4 L13.9 5.9"/><path d="M2 14 L5.9 9.9 M13.8 14 L9.9 9.9"/></g></svg>
<svg class="abs" style="left:1534px;top:651px" width="16" height="16" viewBox="0 0 16 16"><g fill="none" stroke="#0f4c8c" stroke-width="1.3" stroke-linecap="round" stroke-linejoin="round"><rect x="1.7" y="1.7" width="11.6" height="11.5" rx="1.4"/><path d="M1.2 2.3 H13.8" stroke-width="2.6" stroke-linecap="butt"/><path d="M3.6 8 C5.4 4.7 9.6 4.7 11.4 8 C9.6 11.3 5.4 11.3 3.6 8 Z" fill="#0f4c8c" stroke="none"/><circle cx="7.5" cy="8" r="1.25" fill="none" stroke="#fff" stroke-width="0.65"/></g></svg>
<svg class="abs" style="left:1565px;top:650px" width="16" height="18" viewBox="0 0 16 18"><g fill="none" stroke="#0f4c8c" stroke-width="1.35" stroke-linecap="round" stroke-linejoin="round"><path d="M6.8 15.4 H3 A1.3 1.3 0 0 1 1.7 14.1 V3 A1.3 1.3 0 0 1 3 1.7 H9 L13.1 5.8 V9.7"/><path d="M9 2 V4.6 A1.2 1.2 0 0 0 10.2 5.8 H12.8"/><path d="M8.4 14 H13.6 M11.3 11.5 L13.8 14 L11.3 16.5"/></g></svg>
<svg class="abs" style="left:1594px;top:650px" width="17" height="18" viewBox="0 0 17 18"><g fill="none" stroke="#0f4c8c" stroke-width="1.4" stroke-linecap="round" stroke-linejoin="round"><path d="M1.7 8.6 V3 A1.3 1.3 0 0 1 3 1.7 H8.4 L12.4 5.7 V8.6"/><path d="M8.4 2 V4.5 A1.2 1.2 0 0 0 9.6 5.7 H12.1"/><path d="M1.5 10.9 L4.9 15.6 M4.9 10.9 L1.5 15.6 M6.4 15.8 V10.9 L8.5 13.8 L10.6 10.9 V15.8 M12.3 10.9 V15.5 H16.2" stroke-width="1.6" stroke-linecap="butt" stroke-linejoin="miter"/></g></svg>
<div class="ln" style="top:686px"></div>
<div class="cb" style="top:703px"></div>
<div class="cell" style="left:323px;top:703px">INV/000010</div>
<div class="cell" style="left:514px;top:703px">Marketing IT Place</div>
<div class="cell" style="left:705px;top:703px">25-02-2025</div>
<div class="cell" style="left:896px;top:703px">14-05-2025</div>
<div class="cell r" style="left:1058px;width:200px;top:703px">3.530,90 €</div>
<div class="cell r" style="left:1250px;width:200px;top:703px">3.947,75 €</div>
<svg class="abs" style="left:1502px;top:704px" width="17" height="17" viewBox="0 0 17 17"><g fill="none" stroke="#0f4c8c" stroke-width="1.4" stroke-linecap="round" stroke-linejoin="round"><path d="M14.6 8.8 V2.8 A1 1 0 0 0 13.6 1.8 H2.6 A1 1 0 0 0 1.6 2.8 V11.2 A1 1 0 0 0 2.6 12.2 H7.7"/><path d="M2 2.3 L7.9 7.2 L14.2 2.3"/><path d="M10 12.2 H15 M12.6 9.8 L15.1 12.2 L12.6 14.6"/></g></svg>
<svg class="abs" style="left:1534px;top:703px" width="16" height="16" viewBox="0 0 16 16"><g fill="none" stroke="#0f4c8c" stroke-width="1.3" stroke-linecap="round" stroke-linejoin="round"><rect x="1.7" y="1.7" width="11.6" height="11.5" rx="1.4"/><path d="M1.2 2.3 H13.8" stroke-width="2.6" stroke-linecap="butt"/><path d="M3.6 8 C5.4 4.7 9.6 4.7 11.4 8 C9.6 11.3 5.4 11.3 3.6 8 Z" fill="#0f4c8c" stroke="none"/><circle cx="7.5" cy="8" r="1.25" fill="none" stroke="#fff" stroke-width="0.65"/></g></svg>
<svg class="abs" style="left:1565px;top:702px" width="16" height="18" viewBox="0 0 16 18"><g fill="none" stroke="#0f4c8c" stroke-width="1.35" stroke-linecap="round" stroke-linejoin="round"><path d="M6.8 15.4 H3 A1.3 1.3 0 0 1 1.7 14.1 V3 A1.3 1.3 0 0 1 3 1.7 H9 L13.1 5.8 V9.7"/><path d="M9 2 V4.6 A1.2 1.2 0 0 0 10.2 5.8 H12.8"/><path d="M8.4 14 H13.6 M11.3 11.5 L13.8 14 L11.3 16.5"/></g></svg>
<svg class="abs" style="left:1594px;top:702px" width="17" height="18" viewBox="0 0 17 18"><g fill="none" stroke="#0f4c8c" stroke-width="1.4" stroke-linecap="round" stroke-linejoin="round"><path d="M1.7 8.6 V3 A1.3 1.3 0 0 1 3 1.7 H8.4 L12.4 5.7 V8.6"/><path d="M8.4 2 V4.5 A1.2 1.2 0 0 0 9.6 5.7 H12.1"/><path d="M1.5 10.9 L4.9 15.6 M4.9 10.9 L1.5 15.6 M6.4 15.8 V10.9 L8.5 13.8 L10.6 10.9 V15.8 M12.3 10.9 V15.5 H16.2" stroke-width="1.6" stroke-linecap="butt" stroke-linejoin="miter"/></g></svg>
<div class="ln" style="top:738px"></div>
<div class="cb" style="top:755px"></div>
<div class="cell" style="left:323px;top:755px">INV/000009</div>
<div class="cell" style="left:514px;top:755px">Marketing IT Place</div>
<div class="cell" style="left:705px;top:755px">25-02-2025</div>
<div class="cell" style="left:896px;top:755px">14-05-2025</div>
<div class="cell r" style="left:1058px;width:200px;top:755px">3.699,92 €</div>
<div class="cell r" style="left:1250px;width:200px;top:755px">4.476,90 €</div>
<svg class="abs" style="left:1502px;top:756px" width="16" height="16" viewBox="0 0 16 16"><g fill="none" stroke="#0f4c8c" stroke-width="1.4" stroke-linecap="round" stroke-linejoin="round"><path d="M1.6 5.6 L7.9 1.1 L14.2 5.6 V13.6 A0.8 0.8 0 0 1 13.4 14.4 H2.4 A0.8 0.8 0 0 1 1.6 13.6 Z"/><path d="M1.9 5.9 L7.9 9.4 L13.9 5.9"/><path d="M2 14 L5.9 9.9 M13.8 14 L9.9 9.9"/></g></svg>
<svg class="abs" style="left:1534px;top:755px" width="16" height="16" viewBox="0 0 16 16"><g fill="none" stroke="#0f4c8c" stroke-width="1.3" stroke-linecap="round" stroke-linejoin="round"><rect x="1.7" y="1.7" width="11.6" height="11.5" rx="1.4"/><path d="M1.2 2.3 H13.8" stroke-width="2.6" stroke-linecap="butt"/><path d="M3.6 8 C5.4 4.7 9.6 4.7 11.4 8 C9.6 11.3 5.4 11.3 3.6 8 Z" fill="#0f4c8c" stroke="none"/><circle cx="7.5" cy="8" r="1.25" fill="none" stroke="#fff" stroke-width="0.65"/></g></svg>
<svg class="abs" style="left:1565px;top:754px" width="16" height="18" viewBox="0 0 16 18"><g fill="none" stroke="#0f4c8c" stroke-width="1.35" stroke-linecap="round" stroke-linejoin="round"><path d="M6.8 15.4 H3 A1.3 1.3 0 0 1 1.7 14.1 V3 A1.3 1.3 0 0 1 3 1.7 H9 L13.1 5.8 V9.7"/><path d="M9 2 V4.6 A1.2 1.2 0 0 0 10.2 5.8 H12.8"/><path d="M8.4 14 H13.6 M11.3 11.5 L13.8 14 L11.3 16.5"/></g></svg>
<svg class="abs" style="left:1594px;top:754px" width="17" height="18" viewBox="0 0 17 18"><g fill="none" stroke="#0f4c8c" stroke-width="1.4" stroke-linecap="round" stroke-linejoin="round"><path d="M1.7 8.6 V3 A1.3 1.3 0 0 1 3 1.7 H8.4 L12.4 5.7 V8.6"/><path d="M8.4 2 V4.5 A1.2 1.2 0 0 0 9.6 5.7 H12.1"/><path d="M1.5 10.9 L4.9 15.6 M4.9 10.9 L1.5 15.6 M6.4 15.8 V10.9 L8.5 13.8 L10.6 10.9 V15.8 M12.3 10.9 V15.5 H16.2" stroke-width="1.6" stroke-linecap="butt" stroke-linejoin="miter"/></g></svg>
<div class="ln" style="top:790px"></div>
<svg class="abs" style="left:1430px;top:320px;overflow:visible" width="110" height="160" viewBox="1430 320 110 160">
<defs><filter id="sh" x="-30%" y="-30%" width="160%" height="160%"><feGaussianBlur in="SourceAlpha" stdDeviation="2.2"/><feOffset dx="0.8" dy="1.2"/><feComponentTransfer><feFuncA type="linear" slope="0.55"/></feComponentTransfer><feMerge><feMergeNode/><feMergeNode in="SourceGraphic"/></feMerge></filter></defs>
<g filter="url(#sh)">
<rect x="1495.8" y="334.5" width="29.8" height="27.4" rx="12.5" fill="none" stroke="#7c0cf8" stroke-width="3.2"/>
<path d="M1448.5 463 L1488 381" stroke="#7c0cf8" stroke-width="3.5" stroke-linecap="round" fill="none"/>
<path d="M1498.5 363.5 L1481 378.5 L1496.5 385 Z" fill="#7c0cf8" stroke="#7c0cf8" stroke-width="1" stroke-linejoin="round"/>
</g></svg>
<div class="abs" style="left:1570px;top:744px;width:84px;height:39px;border-radius:20px;background:#0f4c8c;border:1.5px solid #fff;box-shadow:0 2px 6px rgba(0,0,0,0.18)"></div>
<div class="t" style="left:1604px;top:755px;font-size:16px;line-height:20px;color:#fff;-webkit-text-stroke:0.3px #fff">Apu</div>
<div class="abs" style="left:1550px;top:738px;width:46px;height:45px;border-radius:50%;background:linear-gradient(235deg,#0e4886 0%,#1a5c9e 45%,#2c7fc1 100%);border:2px solid #fff"></div>
<svg class="abs" style="left:1563.5px;top:751.5px" width="20" height="20" viewBox="0 0 16 16"><g fill="none" stroke="#fff" stroke-width="1.3" stroke-linecap="round" stroke-linejoin="round"><path d="M9.6 6 A4.6 4 0 1 0 2.8 9.4 L2.4 11.4 L4.6 10.4 A4.6 4 0 0 0 6.2 10.6"/><path d="M6.2 10.8 A3.8 3.4 0 1 1 13.4 12 L14.2 13.8 L12.2 13.2 A3.8 3.4 0 0 1 6.2 10.8 Z"/><circle cx="4.6" cy="6" r="0.5" fill="#fff"/><circle cx="6.6" cy="6" r="0.5" fill="#fff"/><circle cx="9" cy="10.8" r="0.5" fill="#fff"/><circle cx="11" cy="10.8" r="0.5" fill="#fff"/></g></svg>
<div class="abs" style="left:1674px;top:0;width:3px;height:787px;background:#ececec"></div>
<div class="abs" style="left:1675px;top:0;width:2px;height:677px;border-radius:0 0 1px 1px;background:#9b9b9b"></div>
</div></body></html>
